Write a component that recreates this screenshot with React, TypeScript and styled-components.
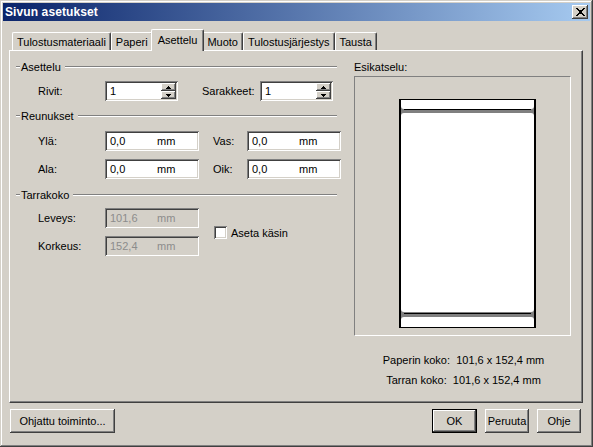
import React from "react";
import styled, { createGlobalStyle, css } from "styled-components";

const GlobalStyle = createGlobalStyle`
  html, body { margin: 0; padding: 0; background: #d4d0c8; }
  body { font-family: "Liberation Sans", Arial, sans-serif; font-size: 11px; color: #000; }
  * { box-sizing: border-box; }
`;

const FACE = "#d4d0c8";

const raised = css`
  box-shadow: inset -1px -1px #404040, inset 1px 1px #ffffff, inset -2px -2px #808080, inset 2px 2px ${FACE};
`;
const sunken = css`
  box-shadow: inset 1px 1px #808080, inset -1px -1px #ffffff, inset 2px 2px #404040, inset -2px -2px ${FACE};
`;

const Window = styled.div`
  width: 593px;
  height: 447px;
  background: ${FACE};
  padding: 3px;
  display: flex;
  flex-direction: column;
  box-shadow: inset -1px -1px #404040, inset 1px 1px ${FACE}, inset -2px -2px #808080, inset 2px 2px #ffffff;
`;

const TitleBar = styled.div`
  height: 18px;
  background: linear-gradient(to right, #0a246a, #a6caf0);
  display: flex;
  align-items: center;
  justify-content: space-between;
  padding: 0 2px 0 2px;
`;

const Title = styled.span`
  color: #fff;
  font-weight: bold;
  font-size: 12px;
  letter-spacing: 0.1px;
`;

const CloseButton = styled.div`
  width: 16px;
  height: 14px;
  background: ${FACE};
  ${raised};
  display: flex;
  align-items: center;
  justify-content: center;
  padding-bottom: 1px;
`;

const Body = styled.div`
  flex: 1;
  display: flex;
  flex-direction: column;
  padding: 8px 7px 0 6px;
`;

const TabRow = styled.div`
  display: flex;
  align-items: flex-end;
  height: 21px;
  padding-left: 3px;
`;

const Tab = styled.div<{ $active?: boolean }>`
  height: 18px;
  padding: 0 4px 0 4px;
  display: flex;
  align-items: center;
  background: ${FACE};
  border-top: 1px solid #fff;
  border-left: 1px solid #fff;
  border-right: 1px solid #404040;
  border-radius: 2px 2px 0 0;
  box-shadow: inset -1px 0 #808080;
  white-space: nowrap;
  ${(p) =>
    p.$active &&
    css`
      height: 22px;
      margin: 0 -2px -1px -2px;
      padding: 0 6px 2px 6px;
      position: relative;
      z-index: 1;
    `}
`;

const Panel = styled.div`
  width: 574px;
  height: 353px;
  border-top: 1px solid #fff;
  border-left: 1px solid #fff;
  border-right: 1px solid #404040;
  border-bottom: 1px solid #404040;
  box-shadow: inset -1px -1px #808080;
  display: grid;
  grid-template-columns: 321px 217px;
  column-gap: 17px;
  padding: 9px 0 0 6px;
  align-content: start;
`;

const Column = styled.div`
  display: flex;
  flex-direction: column;
`;

const SectionHeader = styled.div<{ $mt?: number }>`
  display: flex;
  align-items: center;
  height: 14px;
  margin-top: ${(p) => p.$mt ?? 0}px;
`;

const Etch = styled.div<{ $w?: number }>`
  height: 2px;
  border-top: 1px solid #808080;
  border-bottom: 1px solid #fff;
  ${(p) => (p.$w ? `width: ${p.$w}px;` : "flex: 1;")}
`;

const SectionLabel = styled.span`
  padding: 0 4px 0 1px;
`;

const Row = styled.div<{ $mt: number }>`
  display: flex;
  align-items: center;
  height: 20px;
  margin-top: ${(p) => p.$mt}px;
`;

const Label = styled.span<{ $w: number; $pl?: number }>`
  width: ${(p) => p.$w}px;
  padding-left: ${(p) => p.$pl ?? 0}px;
  flex-shrink: 0;
  white-space: nowrap;
`;

const Field = styled.div<{ $w: number; $disabled?: boolean }>`
  width: ${(p) => p.$w}px;
  height: 20px;
  background: ${(p) => (p.$disabled ? FACE : "#fff")};
  color: ${(p) => (p.$disabled ? "#8c8c8c" : "#000")};
  ${sunken};
  display: flex;
  align-items: center;
  padding: 2px 2px 2px 5px;
  flex-shrink: 0;
`;

const Value = styled.span`
  width: 47px;
`;

const Unit = styled.span``;

const Spin = styled.div`
  margin-left: auto;
  display: flex;
  flex-direction: column;
  width: 15px;
  height: 16px;
`;

const SpinButton = styled.div`
  flex: 1;
  background: ${FACE};
  ${raised};
  display: flex;
  align-items: center;
  justify-content: center;
`;

const Gap = styled.div<{ $w: number }>`
  width: ${(p) => p.$w}px;
  flex-shrink: 0;
`;

const SizeGrid = styled.div`
  display: grid;
  grid-template-columns: 89px 94px auto;
  grid-template-rows: 20px 20px;
  row-gap: 8px;
  align-items: center;
  margin-top: 6px;
`;

const CheckRow = styled.div`
  grid-column: 3;
  grid-row: 1 / span 2;
  display: flex;
  align-items: center;
  gap: 4px;
  margin: 1px 0 0 15px;
`;

const CheckBox = styled.div`
  width: 13px;
  height: 13px;
  background: #fff;
  ${sunken};
`;

const PreviewLabel = styled.div`
  height: 14px;
  line-height: 14px;
`;

const PreviewBox = styled.div`
  margin-top: 2px;
  width: 217px;
  height: 260px;
  border-top: 1px solid #808080;
  border-left: 1px solid #808080;
  border-right: 1px solid #fff;
  border-bottom: 1px solid #fff;
  padding: 22px 0 0 44px;
`;

const Info = styled.div`
  margin-top: 14px;
  text-align: center;
  line-height: 20px;
  white-space: pre;
  padding-left: 2px;
`;

const ButtonRow = styled.div`
  display: flex;
  margin-top: 6px;
  padding: 0 2px 0 1px;
  gap: 8px;
`;

const Button = styled.div<{ $w: number; $default?: boolean }>`
  width: ${(p) => p.$w}px;
  height: 24px;
  background: ${FACE};
  display: flex;
  align-items: center;
  justify-content: center;
  white-space: nowrap;
  ${(p) =>
    p.$default
      ? css`
          border: 1px solid #000;
          box-shadow: inset -1px -1px #404040, inset 1px 1px #ffffff, inset -2px -2px #808080;
        `
      : raised};
`;

const Spacer = styled.div`
  flex: 1;
`;

const UpArrow = () => (
  <svg width="5" height="3" viewBox="0 0 5 3">
    <path d="M2 0h1v1h1v1h1v1H0V2h1V1h1z" fill="#000" />
  </svg>
);
const DownArrow = () => (
  <svg width="5" height="3" viewBox="0 0 5 3">
    <path d="M0 0h5v1H4v1H3v1H2V2H1V1H0z" fill="#000" />
  </svg>
);

const CloseIcon = () => (
  <svg width="9" height="8" viewBox="0 0 9 8" shapeRendering="crispEdges">
    <path
      d="M0 0h2v1h1v1h3V1h1V0h2v1H8v1H7v1H6v2h1v1h1v1h1v1H7V7H6V6H3v1H2v1H0V7h1V6h1V5h1V3H2V2H1V1H0z"
      fill="#000"
    />
    <rect x="3" y="2" width="3" height="4" fill="#000" />
  </svg>
);

const SpinField = ({ value }: { value: string }) => (
  <Field $w={73}>
    <span>{value}</span>
    <Spin>
      <SpinButton>
        <UpArrow />
      </SpinButton>
      <SpinButton>
        <DownArrow />
      </SpinButton>
    </Spin>
  </Field>
);

const MmField = ({ value, disabled }: { value: string; disabled?: boolean }) => (
  <Field $w={94} $disabled={disabled}>
    <Value>{value}</Value>
    <Unit>mm</Unit>
  </Field>
);

const Header = ({ text, mt }: { text: string; mt?: number }) => (
  <SectionHeader $mt={mt}>
    <Etch $w={4} />
    <SectionLabel>{text}</SectionLabel>
    <Etch />
  </SectionHeader>
);

const PaperPreview = () => (
  <svg width="137" height="229" viewBox="0 0 137 229">
    <rect x="0" y="0" width="137" height="229" fill="#000" />
    <rect x="2" y="1" width="133" height="227" fill="#808080" />
    <path d="M2 1H135V7Q135 10 132 10H5Q2 10 2 7Z" fill="#fff" />
    <rect x="5" y="10" width="127" height="1" fill="#000" />
    <path d="M2 17Q2 14 5 14H132Q135 14 135 17V210Q135 213 132 213H5Q2 213 2 210Z" fill="#fff" />
    <rect x="5" y="214" width="127" height="1" fill="#000" />
    <path d="M2 221Q2 218 5 218H132Q135 218 135 221V228H2Z" fill="#fff" />
  </svg>
);

const tabs = ["Tulostusmateriaali", "Paperi", "Asettelu", "Muoto", "Tulostusjärjestys", "Tausta"];

export default function App() {
  return (
    <>
      <GlobalStyle />
      <Window>
        <TitleBar>
          <Title>Sivun asetukset</Title>
          <CloseButton>
            <CloseIcon />
          </CloseButton>
        </TitleBar>
        <Body>
          <TabRow>
            {tabs.map((t) => (
              <Tab key={t} $active={t === "Asettelu"}>
                {t}
              </Tab>
            ))}
          </TabRow>
          <Panel>
            <Column>
              <Header text="Asettelu" />
              <Row $mt={7}>
                <Label $w={89} $pl={22}>Rivit:</Label>
                <SpinField value="1" />
                <Gap $w={24} />
                <Label $w={58}>Sarakkeet:</Label>
                <SpinField value="1" />
              </Row>
              <Header text="Reunukset" mt={8} />
              <Row $mt={8}>
                <Label $w={89} $pl={22}>Ylä:</Label>
                <MmField value="0,0" />
                <Gap $w={14} />
                <Label $w={34}>Vas:</Label>
                <MmField value="0,0" />
              </Row>
              <Row $mt={8}>
                <Label $w={89} $pl={22}>Ala:</Label>
                <MmField value="0,0" />
                <Gap $w={14} />
                <Label $w={34}>Oik:</Label>
                <MmField value="0,0" />
              </Row>
              <Header text="Tarrakoko" mt={9} />
              <SizeGrid>
                <Label $w={89} $pl={22}>Leveys:</Label>
                <MmField value="101,6" disabled />
                <CheckRow>
                  <CheckBox />
                  <span>Aseta käsin</span>
                </CheckRow>
                <Label $w={89} $pl={22}>Korkeus:</Label>
                <MmField value="152,4" disabled />
              </SizeGrid>
            </Column>
            <Column>
              <PreviewLabel>Esikatselu:</PreviewLabel>
              <PreviewBox>
                <PaperPreview />
              </PreviewBox>
              <Info>
                {"Paperin koko:  101,6 x 152,4 mm"}
                <br />
                {"Tarran koko:  101,6 x 152,4 mm"}
              </Info>
            </Column>
          </Panel>
          <ButtonRow>
            <Button $w={105}>Ohjattu toiminto...</Button>
            <Spacer />
            <Button $w={45} $default>
              OK
            </Button>
            <Button $w={44}>Peruuta</Button>
            <Button $w={44}>Ohje</Button>
          </ButtonRow>
        </Body>
      </Window>
    </>
  );
}
